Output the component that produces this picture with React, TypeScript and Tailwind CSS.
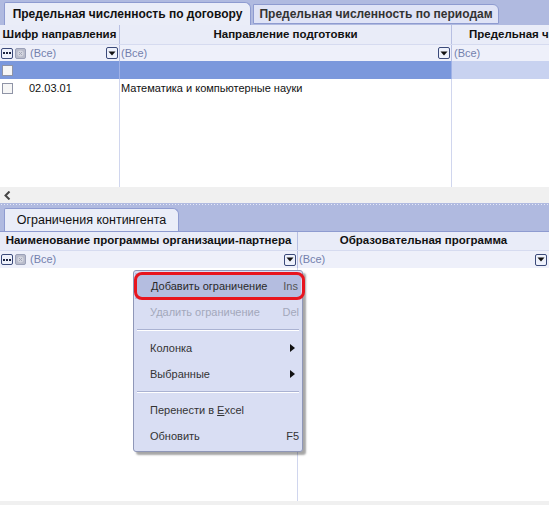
import React from "react";

const font = { fontFamily: "'Liberation Sans', Arial, sans-serif" };

function DotsButton() {
  return (
    <span className="flex h-[11px] w-[12px] shrink-0 items-center justify-center rounded-[2px] border border-[#3b4a7a] bg-[#eef1fb]">
      <span className="flex gap-[1px]">
        <span className="h-[2px] w-[2px] bg-[#1b2340]" />
        <span className="h-[2px] w-[2px] bg-[#1b2340]" />
        <span className="h-[2px] w-[2px] bg-[#1b2340]" />
      </span>
    </span>
  );
}

function ClearButton() {
  return (
    <span className="flex h-[11px] w-[11px] shrink-0 items-center justify-center rounded-[2px] border border-[#9aa0b8] bg-[#b9bccb]">
      <svg width="7" height="7" viewBox="0 0 7 7">
        <circle cx="3.5" cy="3.5" r="3" fill="#d4d6e0" />
        <path d="M2 2 L5 5 M5 2 L2 5" stroke="#a3a7b8" strokeWidth="1" />
      </svg>
    </span>
  );
}

function DropButton() {
  return (
    <span className="flex h-[12px] w-[12px] shrink-0 items-center justify-center rounded-[2px] border border-[#3b4a7a] bg-[#eef1fb]">
      <svg width="8" height="5" viewBox="0 0 8 5">
        <path d="M0.5 0.5 H7.5 L4 4.5 Z" fill="#111" />
      </svg>
    </span>
  );
}

function Checkbox() {
  return <span className="block h-[11px] w-[11px] shrink-0 border border-[#8f94a6] bg-[#f6f6f6]" />;
}

function All() {
  return <span className="whitespace-nowrap text-[11px] leading-none text-[#7380ad]">(Все)</span>;
}

function Arrow() {
  return (
    <svg width="5" height="8" viewBox="0 0 5 8" className="mr-[4px]">
      <path d="M0 0 L5 4 L0 8 Z" fill="#111" />
    </svg>
  );
}

function ContextMenu() {
  const item = "flex h-[26px] items-center justify-between whitespace-nowrap pl-[16px] pr-[3px] text-[11px]";
  return (
    <div className="absolute left-[133px] top-[270px] w-[170px] rounded-[3px] border border-[#8f97b8] bg-[#d9def3] py-[2px] shadow-[3px_3px_2px_rgba(0,0,0,0.35)]">
      <div className="relative mx-[1px]">
        <div className={`${item} bg-[#b4bde0] text-[#2a2a2a]`}>
          <span>Добавить ограничение</span>
          <span className="text-[#555]">Ins</span>
        </div>
        <div className="pointer-events-none absolute -left-[1px] -top-[1px] -right-[4px] -bottom-[1px] rounded-[8px] border-[3px] border-[#e8151e]" />
      </div>
      <div className={`${item} text-[#a3a8bb]`}>
        <span>Удалить ограничение</span>
        <span>Del</span>
      </div>
      <div className="mx-[3px] my-[4px] h-[2px] border-t border-b border-t-[#aab2d2] border-b-white" />
      <div className={`${item} text-[#333]`}>
        <span>Колонка</span>
        <Arrow />
      </div>
      <div className={`${item} text-[#333]`}>
        <span>Выбранные</span>
        <Arrow />
      </div>
      <div className="mx-[3px] my-[4px] h-[2px] border-t border-b border-t-[#aab2d2] border-b-white" />
      <div className={`${item} text-[#333]`}>
        <span>
          Перенести в <span className="underline">E</span>xcel
        </span>
      </div>
      <div className={`${item} text-[#333]`}>
        <span>Обновить</span>
        <span>F5</span>
      </div>
    </div>
  );
}

export default function App() {
  return (
    <div className="relative flex h-[505px] w-[549px] flex-col overflow-hidden bg-white text-[#111]" style={font}>
      {/* upper grid */}
      <div className="flex h-[25px] items-end gap-[2px] bg-[#b0bae0] pl-[4px]">
        <div className="flex h-[23px] w-[247px] items-center justify-center whitespace-nowrap rounded-tr-[6px] rounded-tl-[2px] border border-b-0 border-[#8e9bd0] bg-[#eaedf8] text-[12px] font-bold">
          Предельная численность по договору
        </div>
        <div className="mb-[1px] flex h-[20px] w-[246px] items-center justify-center whitespace-nowrap rounded-tr-[6px] border border-[#8e9bd0] bg-[#dfe3f6] text-[12px] font-bold text-[#333]">
          Предельная численность по периодам
        </div>
      </div>
      <div className="grid h-[19px] grid-cols-[120px_332px_1fr] bg-[#e9ecf8] text-[11.5px] font-bold">
        <div className="flex items-center justify-center whitespace-nowrap border-r border-[#b7bfe2]">Шифр направления</div>
        <div className="flex items-center justify-center whitespace-nowrap border-r border-[#b7bfe2]">Направление подготовки</div>
        <div className="flex items-center overflow-hidden whitespace-nowrap pl-[17px]">Предельная численность</div>
      </div>
      <div className="grid h-[17px] grid-cols-[120px_332px_1fr] border-t border-[#d6dbf0] bg-[#eef0fa]">
        <div className="flex items-center gap-[2px] border-r border-[#b7bfe2] pl-[1px] pr-[1px]">
          <DotsButton />
          <ClearButton />
          <span className="ml-[2px] flex flex-1 items-center">
            <All />
          </span>
          <DropButton />
        </div>
        <div className="flex items-center border-r border-[#b7bfe2] pl-[1px] pr-[1px]">
          <span className="flex flex-1 items-center">
            <All />
          </span>
          <DropButton />
        </div>
        <div className="flex items-center pl-[2px]">
          <All />
        </div>
      </div>
      <div className="grid h-[18px] grid-cols-[120px_332px_1fr]">
        <div className="flex items-center border-r border-[#9fb1e6] bg-[#7b98dc] pl-[2px]">
          <Checkbox />
        </div>
        <div className="border-r border-[#9fb1e6] bg-[#7b98dc]" />
        <div className="bg-[#c8d2f0]" />
      </div>
      <div className="grid h-[18px] grid-cols-[120px_332px_1fr] text-[11px]">
        <div className="flex items-center gap-[16px] border-r border-[#d0d6ee] pl-[2px]">
          <Checkbox />
          <span>02.03.01</span>
        </div>
        <div className="flex items-center whitespace-nowrap border-r border-[#d0d6ee] pl-[1px]">Математика и компьютерные науки</div>
        <div />
      </div>
      <div className="grid h-[90px] grid-cols-[120px_332px_1fr]">
        <div className="border-r border-[#d0d6ee]" />
        <div className="border-r border-[#d0d6ee]" />
        <div />
      </div>
      <div className="flex h-[16px] items-center bg-[#f0f0f0] pl-[4px]">
        <svg width="7" height="9" viewBox="0 0 7 9">
          <path d="M5.5 0.5 L1.5 4.5 L5.5 8.5" stroke="#444" strokeWidth="2" fill="none" />
        </svg>
      </div>
      <div className="h-[3px] bg-[#b0bae0] bg-[radial-gradient(circle,#e4e8f8_0.6px,transparent_0.8px)] bg-[length:3px_3px]" />

      {/* lower grid */}
      <div className="flex h-[25px] items-end bg-[#b0bae0] pl-[4px]">
        <div className="flex h-[23px] w-[175px] items-center justify-center whitespace-nowrap rounded-tr-[6px] rounded-tl-[2px] border border-b-0 border-[#8e9bd0] bg-[#eaedf8] text-[12.5px]">
          Ограничения контингента
        </div>
      </div>
      <div className="grid h-[19px] grid-cols-[298px_1fr] border-t border-[#8e9bd0] bg-[#e9ecf8] text-[11.5px] font-bold">
        <div className="flex items-center justify-center whitespace-nowrap border-r border-[#b7bfe2]">
          Наименование программы организации-партнера
        </div>
        <div className="flex items-center justify-center whitespace-nowrap">Образовательная программа</div>
      </div>
      <div className="grid h-[18px] grid-cols-[298px_1fr] border-t border-[#d6dbf0] bg-[#eef0fa]">
        <div className="flex items-center gap-[2px] border-r border-[#b7bfe2] pl-[1px] pr-[1px]">
          <DotsButton />
          <ClearButton />
          <span className="ml-[2px] flex flex-1 items-center">
            <All />
          </span>
          <DropButton />
        </div>
        <div className="flex items-center pl-[1px] pr-[2px]">
          <span className="flex flex-1 items-center">
            <All />
          </span>
          <DropButton />
        </div>
      </div>
      <div className="grid flex-1 grid-cols-[298px_1fr]">
        <div className="border-r border-[#d0d6ee]" />
        <div />
      </div>
      <div className="h-[4px] bg-[#f0f0f0]" />

      <ContextMenu />
    </div>
  );
}
